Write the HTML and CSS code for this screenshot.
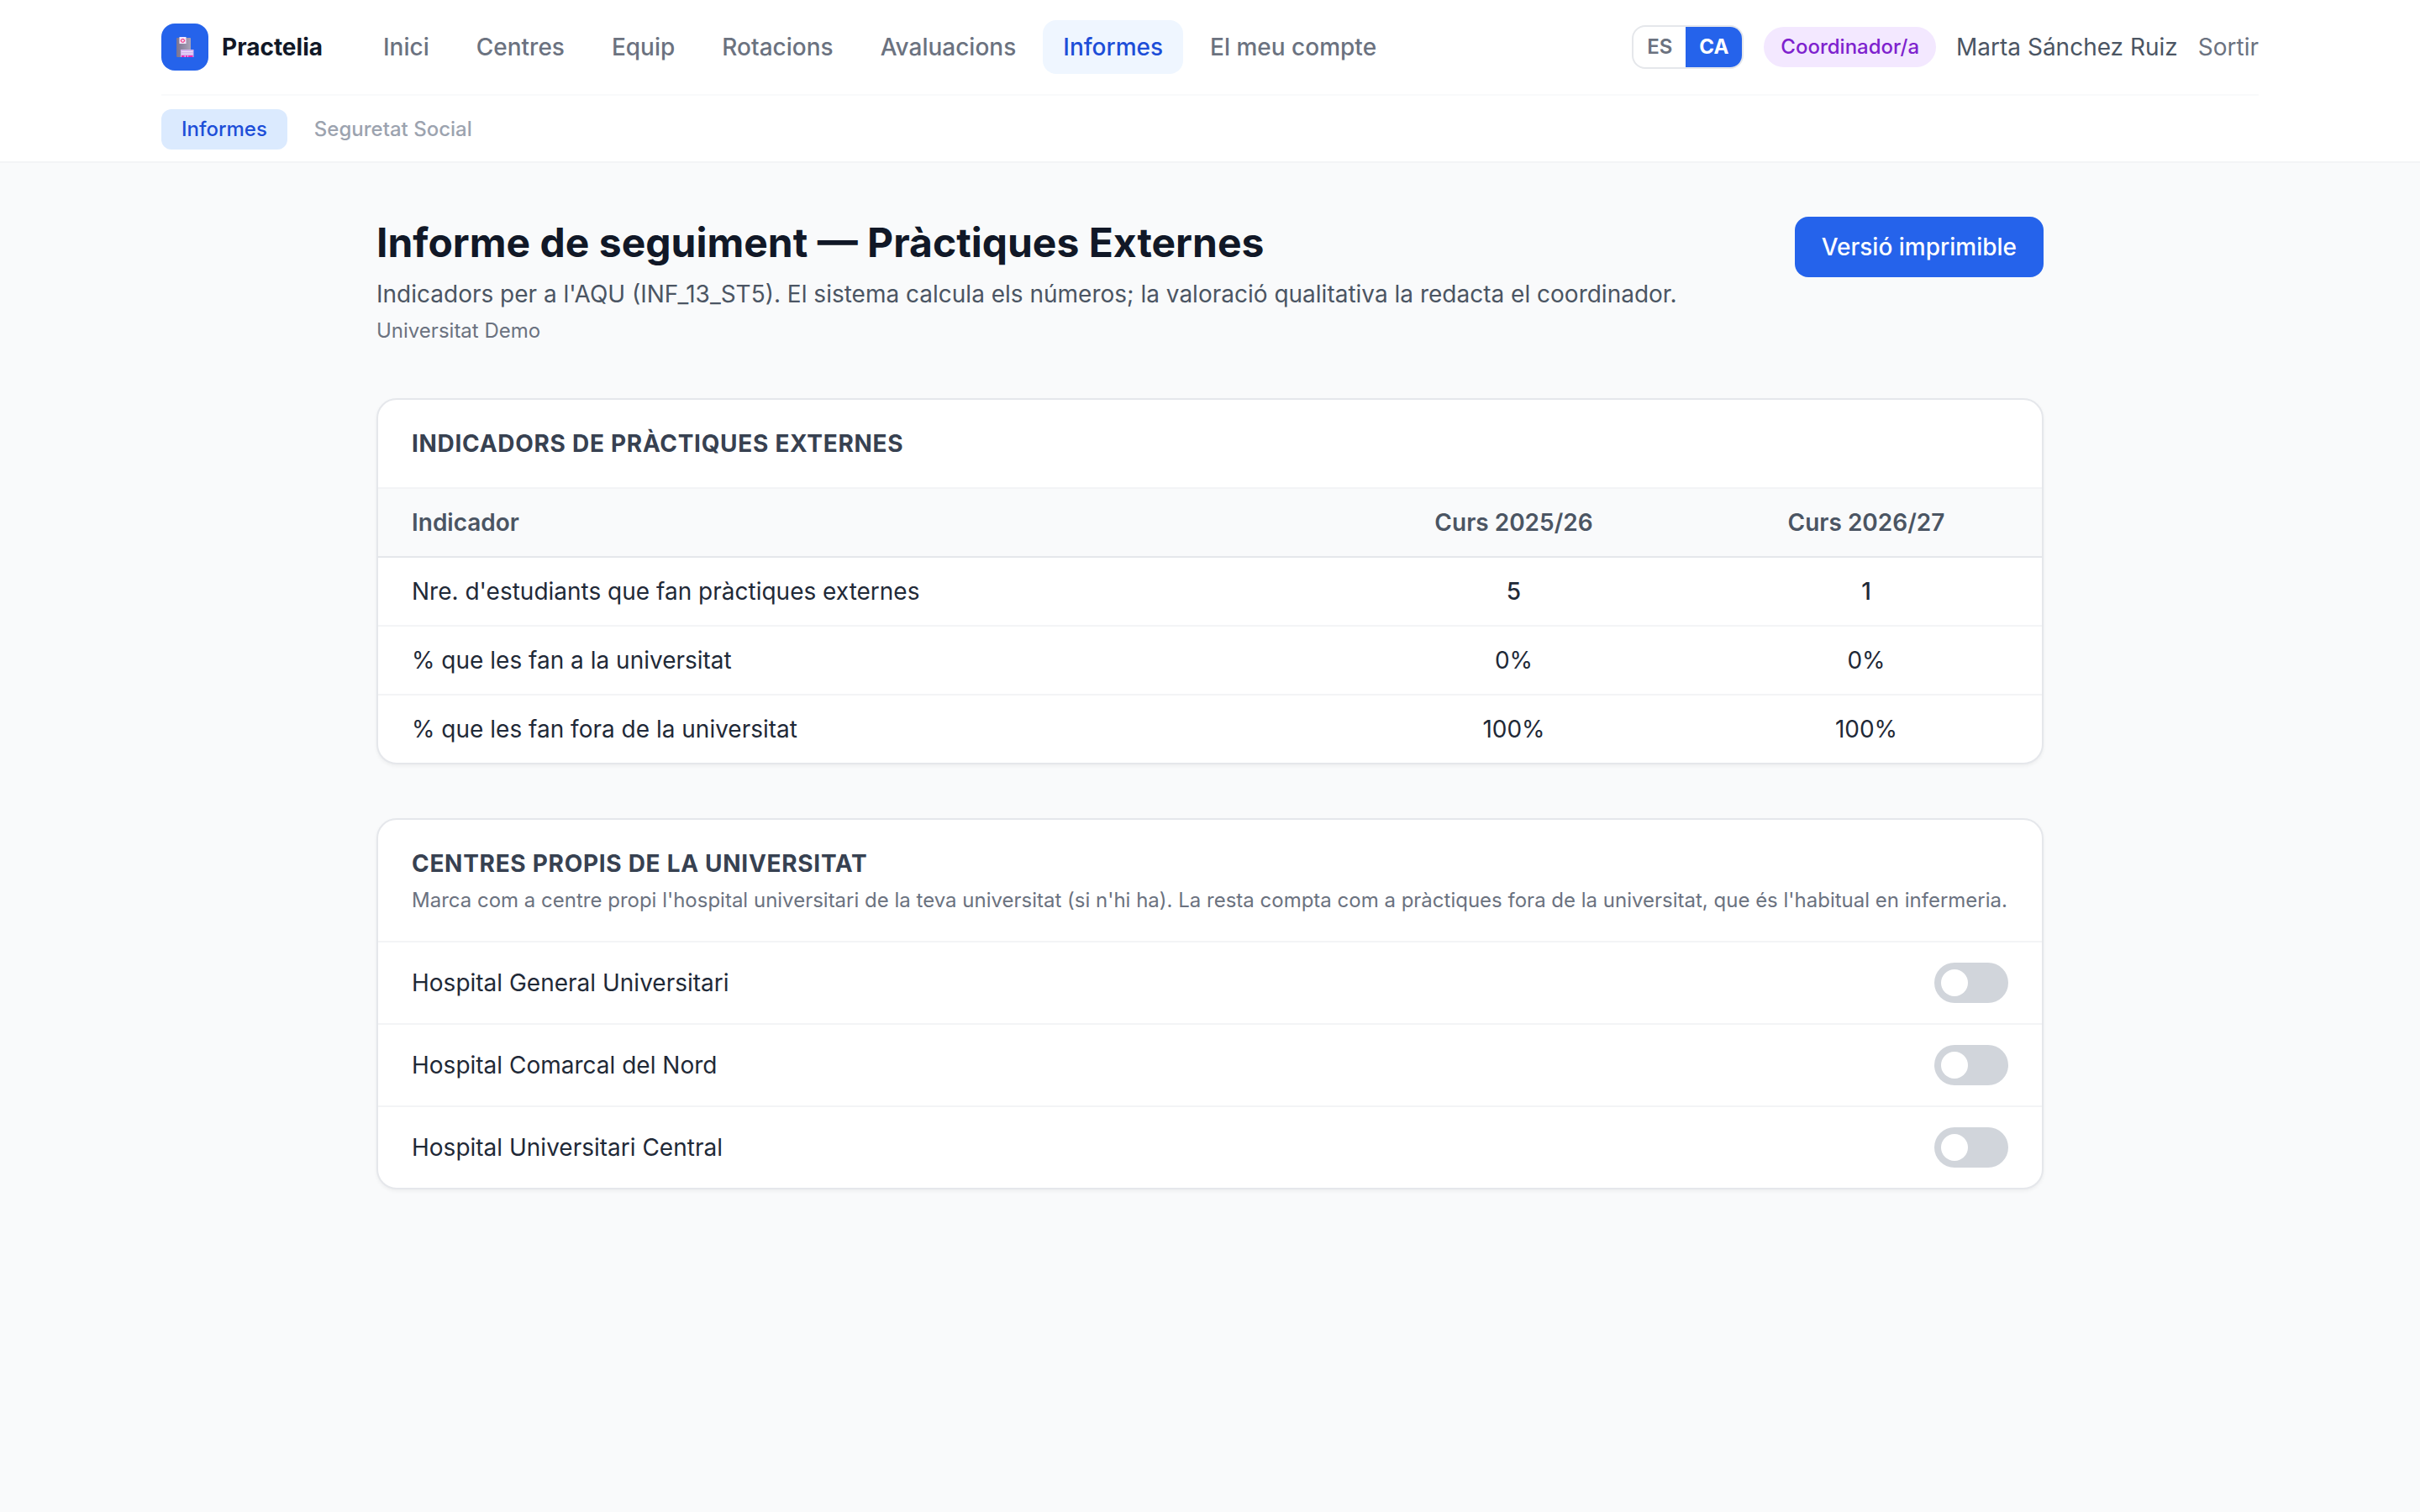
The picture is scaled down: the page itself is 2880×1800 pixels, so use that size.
FILE: index.html
```html
<!DOCTYPE html>
<html lang="ca">
<head>
<meta charset="utf-8">
<title>Practelia</title>
<link rel="stylesheet" href="styles.css">
</head>
<body>
<header class="header">
  <div class="header-inner">
    <div class="topbar">
      <a class="brand">
        <span class="logo">
          <svg width="21" height="24" viewBox="0 0 21 24">
            <defs><linearGradient id="tower" x1="0" x2="1"><stop offset="0" stop-color="#7b7391"/><stop offset="1" stop-color="#a9a4b8"/></linearGradient></defs>
            <rect x="0" y="1" width="17" height="23" rx="1" fill="url(#tower)"/>
            <rect x="3.5" y="0" width="8" height="8" fill="#f4e6fb"/>
            <path d="M6.3 2.6h2.4v1h1v1.6h-1v1H6.3v-1h-1V3.6h1z" fill="none" stroke="#f0307d" stroke-width="1"/>
            <rect x="5" y="15" width="15.5" height="9" fill="#d3b4ee"/>
            <path d="M6 17.5h13.5M6 20h13.5" stroke="#f0e2fb" stroke-width="1"/>
            <path d="M6 23h3.5M11 23h2M14 23h5.5" stroke="#ee2bb4" stroke-width="2"/>
          </svg>
        </span>
        <span class="brand-name">Practelia</span>
      </a>
      <nav class="nav">
        <a class="nav-link">Inici</a>
        <a class="nav-link">Centres</a>
        <a class="nav-link">Equip</a>
        <a class="nav-link">Rotacions</a>
        <a class="nav-link">Avaluacions</a>
        <a class="nav-link active">Informes</a>
        <a class="nav-link">El meu compte</a>
      </nav>
      <div class="user">
        <div class="lang"><span class="lang-option">ES</span><span class="lang-option active">CA</span></div>
        <span class="role">Coordinador/a</span>
        <span class="user-name">Marta Sánchez Ruiz</span>
        <a class="logout">Sortir</a>
      </div>
    </div>
    <nav class="subnav">
      <a class="subnav-link active">Informes</a>
      <a class="subnav-link">Seguretat Social</a>
    </nav>
  </div>
</header>
<main class="main">
  <div class="page-head">
    <div>
      <h1 class="title">Informe de seguiment — Pràctiques Externes</h1>
      <p class="subtitle">Indicadors per a l'AQU (INF_13_ST5). El sistema calcula els números; la valoració qualitativa la redacta el coordinador.</p>
      <p class="org">Universitat Demo</p>
    </div>
    <a class="button">Versió imprimible</a>
  </div>
  <section class="card">
    <div class="card-head"><h2 class="card-title">Indicadors de pràctiques externes</h2></div>
    <table class="table">
      <thead><tr><th>Indicador</th><th class="num">Curs 2025/26</th><th class="num last">Curs 2026/27</th></tr></thead>
      <tbody>
        <tr><td>Nre. d'estudiants que fan pràctiques externes</td><td class="num strong">5</td><td class="num strong">1</td></tr>
        <tr><td>% que les fan a la universitat</td><td class="num">0%</td><td class="num">0%</td></tr>
        <tr><td>% que les fan fora de la universitat</td><td class="num">100%</td><td class="num">100%</td></tr>
      </tbody>
    </table>
  </section>
  <section class="card">
    <div class="card-head">
      <h2 class="card-title">Centres propis de la universitat</h2>
      <p class="card-note">Marca com a centre propi l'hospital universitari de la teva universitat (si n'hi ha). La resta compta com a pràctiques fora de la universitat, que és l'habitual en infermeria.</p>
    </div>
    <ul class="centres">
      <li class="centre"><span>Hospital General Universitari</span><span class="toggle"><span class="knob"></span></span></li>
      <li class="centre"><span>Hospital Comarcal del Nord</span><span class="toggle"><span class="knob"></span></span></li>
      <li class="centre"><span>Hospital Universitari Central</span><span class="toggle"><span class="knob"></span></span></li>
    </ul>
  </section>
</main>
</body>
</html>
```
FILE: styles.css
```css
* { box-sizing: border-box; margin: 0; padding: 0; }
body { min-height: 100vh; background: #f9fafb; color: #1f2937; font: 400 28px/40px Inter, "Liberation Sans", sans-serif; }
.header { background: #fff; border-bottom: 2px solid #f3f4f6; }
.header-inner { width: 2496px; margin: 0 auto; }
.topbar { display: flex; align-items: center; height: 112px; }
.brand { display: flex; align-items: center; gap: 16px; margin-right: 48px; }
.logo { display: flex; align-items: center; justify-content: center; width: 56px; height: 56px; border-radius: 16px; background: #2563eb; }
.brand-name { color: #111827; font-weight: 700; }
.nav { display: flex; gap: 8px; }
.nav-link { padding: 12px 24px; border-radius: 16px; color: #6b7280; font-weight: 500; }
.nav-link.active { background: #eff6ff; color: #1d4ed8; }
.user { display: flex; align-items: center; gap: 24px; margin-left: auto; }
.lang { display: flex; overflow: hidden; border: 2px solid #e5e7eb; border-radius: 16px; font-size: 24px; line-height: 32px; font-weight: 600; }
.lang-option { padding: 8px 16px; color: #6b7280; }
.lang-option.active { background: #2563eb; color: #fff; font-weight: 700; }
.role { padding: 8px 20px; border-radius: 24px; background: #f3e8ff; color: #7e22ce; font-size: 24px; line-height: 32px; font-weight: 500; }
.user-name { color: #4b5563; }
.logout { color: #6b7280; }
.subnav { display: flex; gap: 8px; padding: 16px 0 14px; border-top: 2px solid #f9fafb; }
.subnav-link { padding: 8px 24px; border-radius: 12px; color: #9ca3af; font-size: 24px; line-height: 32px; font-weight: 500; }
.subnav-link.active { background: #dbeafe; color: #1d4ed8; }
.main { display: flex; flex-direction: column; gap: 64px; width: 1984px; margin: 0 auto; padding: 64px 0; }
.page-head { display: flex; align-items: flex-start; justify-content: space-between; }
.title { color: #111827; font-size: 48px; line-height: 62px; font-weight: 700; }
.subtitle { margin-top: 10px; color: #4b5563; }
.org { margin-top: 8px; color: #6b7280; font-size: 24px; line-height: 32px; }
.button { padding: 16px 32px; border-radius: 16px; background: #2563eb; color: #fff; font-weight: 500; }
.card { overflow: hidden; background: #fff; border: 2px solid #e5e7eb; border-radius: 24px; box-shadow: 0 2px 4px rgba(0, 0, 0, .05); }
.card-head { padding: 32px 40px; border-bottom: 2px solid #f3f4f6; }
.card-title { color: #374151; font-size: 28px; line-height: 40px; font-weight: 700; letter-spacing: .025em; text-transform: uppercase; }
.card-note { margin-top: 8px; color: #6b7280; font-size: 24px; line-height: 32px; white-space: nowrap; }
.table { width: 100%; table-layout: fixed; border-collapse: separate; border-spacing: 0; }
.table th { padding: 20px 40px; background: #f9fafb; border-bottom: 2px solid #e5e7eb; color: #4b5563; font-weight: 600; text-align: left; }
.table td { padding: 20px 40px; border-bottom: 2px solid #f3f4f6; }
.table tr:last-child td { border-bottom: 0; }
.table .num { width: 421px; text-align: center; }
.table .last { width: 418px; }
.table .strong { font-weight: 500; }
.centres { list-style: none; }
.centre { display: flex; align-items: center; justify-content: space-between; padding: 24px 40px; }
.centre + .centre { border-top: 2px solid #f3f4f6; }
.toggle { display: flex; align-items: center; width: 88px; height: 48px; padding: 8px; border-radius: 24px; background: #d1d5db; }
.knob { width: 32px; height: 32px; border-radius: 50%; background: #fff; }
```
